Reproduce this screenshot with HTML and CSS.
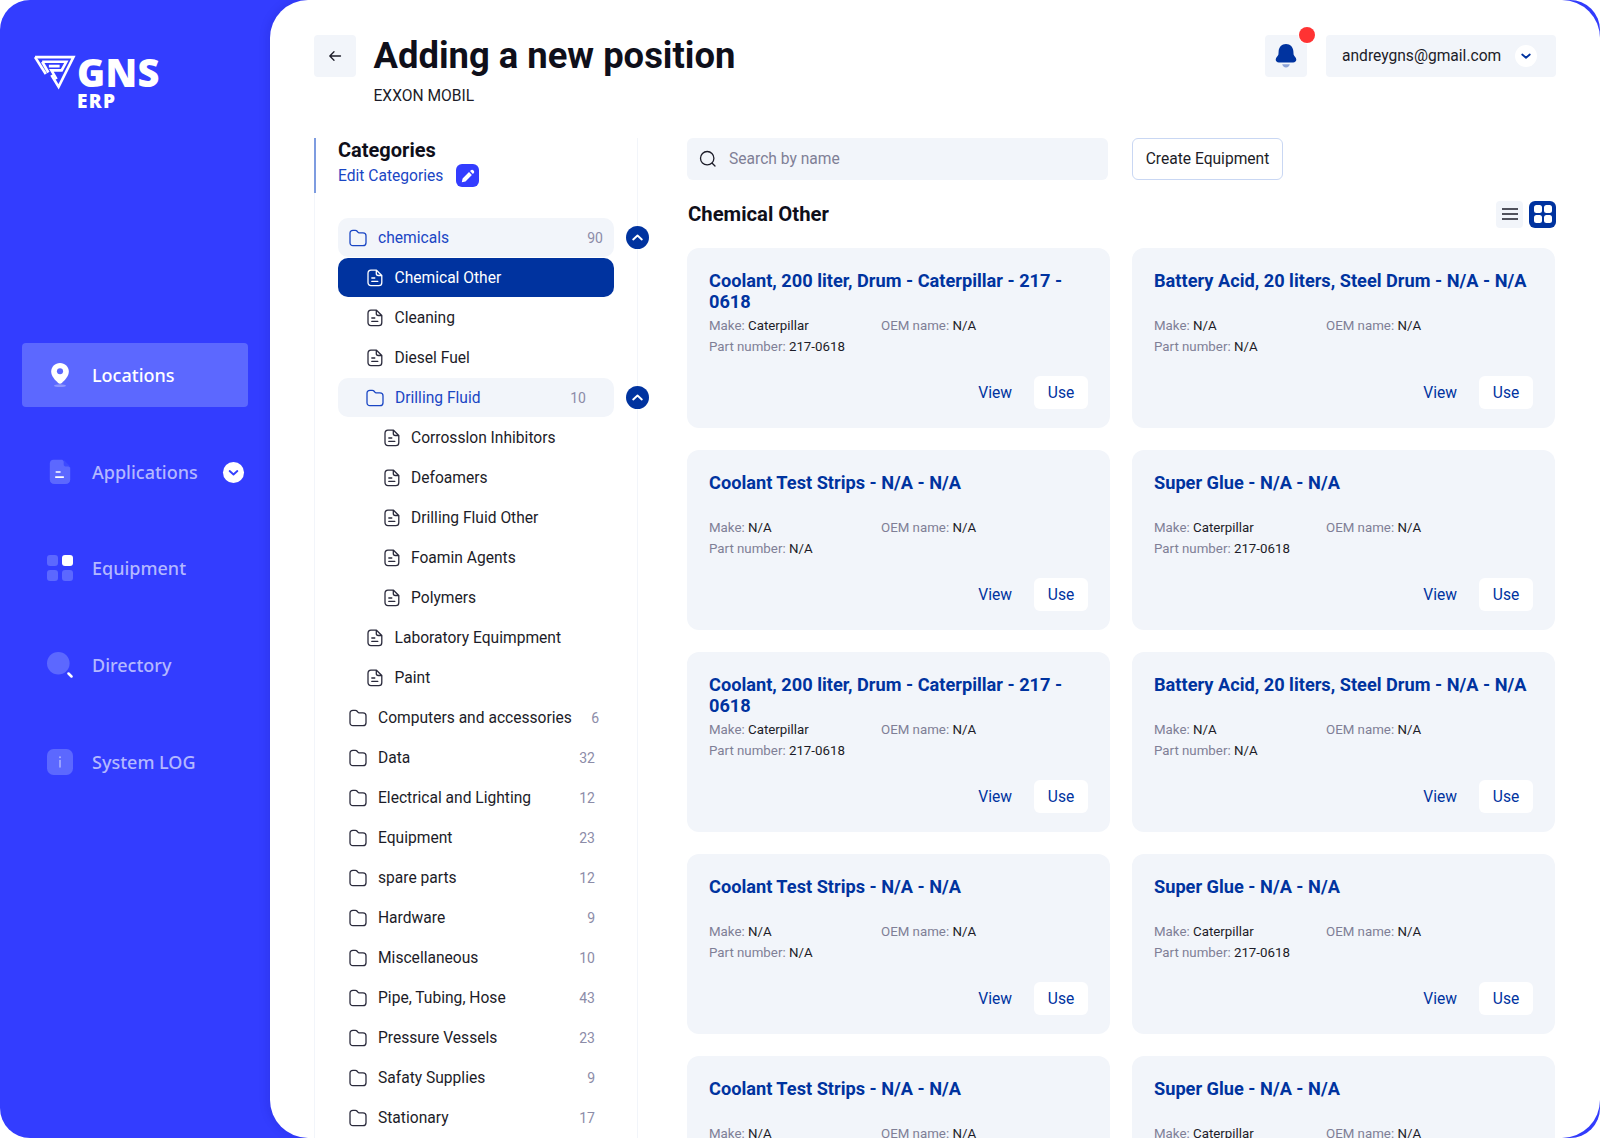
FILE: index.html
```html
<!DOCTYPE html>
<html lang="en">
<head>
<meta charset="utf-8">
<title>Adding a new position</title>
<link rel="stylesheet" href="styles.css">
</head>
<body>
<svg class="sprite" width="0" height="0" aria-hidden="true">
  <symbol id="folder" viewBox="0 0 18 18"><path d="M1 4.200C1 2.400 2.300 1.300 4 1.300h2.200c1 0 1.600.4 2.200 1.200l.5.7c.3.4.7.6 1.200.6H14c1.800 0 3 1.200 3 3v6.900c0 1.900-1.300 3-3 3H4c-1.800 0-3-1.200-3-3z" fill="none" stroke="currentColor" stroke-width="1.300"/></symbol>
  <symbol id="file" viewBox="0 0 16 18"><path d="M4 1.200h5.500L14.800 6.500V13.500c0 1.900-1.200 3.200-3 3.200H4c-1.800 0-3-1.300-3-3.200V4.400C1 2.500 2.200 1.200 4 1.200zM9.300 1.500V4.500c0 1.300.8 2 2 2h3.200M4.800 9h3M4.800 12.400h6" fill="none" stroke="currentColor" stroke-width="1.300" stroke-linecap="round" stroke-linejoin="round"/></symbol>
  <symbol id="up" viewBox="0 0 24 24"><circle cx="12" cy="12" r="12" fill="#00339f"/><path d="M7.500 14l4.500-4 4.500 4" fill="none" stroke="#fff" stroke-width="2" stroke-linecap="round" stroke-linejoin="round"/></symbol>
</svg>
<div class="app">
  <aside class="sidebar">
    <div class="logo">
      <svg class="logo-mark" viewBox="0 0 42 34" aria-hidden="true">
        <g fill="none" stroke="#fff" stroke-width="2.600">
          <path d="M2 2H39.500L25 31 18 19.500"/>
          <path d="M2 2 12.500 18.500"/>
          <path d="M9 6.500H32.500L28 15H18L23 23.500"/>
          <path d="M9 6.500 15 17"/>
          <path d="M15.500 10.800H26"/>
        </g>
      </svg>
      <div class="logo-text"><span class="logo-gns">GNS</span><span class="logo-erp">ERP</span></div>
    </div>
    <nav class="nav">
      <a class="nav-item is-active">
        <svg class="nav-icon" viewBox="0 0 26 28" aria-hidden="true"><ellipse cx="13" cy="25.500" rx="6.500" ry="1.500" fill="#fff" opacity=".3"/><path d="M13 1c5.300 0 9.500 4 9.500 9.200 0 5-4.500 9.500-7.500 12.300-1.200 1.100-2.800 1.100-4 0C8 19.700 3.500 15.200 3.500 10.200 3.500 5 7.700 1 13 1z" fill="#fff"/><circle cx="13" cy="10" r="3.300" fill="#5c68ff"/></svg>
        <span>Locations</span>
      </a>
      <a class="nav-item">
        <svg class="nav-icon" viewBox="0 0 26 28" aria-hidden="true"><path d="M6 .8h9.500L24 9.500V22c0 3-2 5-5 5H7c-3 0-5-2-5-5V5C2 2.500 3.500.8 6 .8z" fill="#5c68ff"/><path d="M17 .8 24 8h-5c-1.300 0-2-.8-2-2z" fill="#3d4aff"/><path d="M9 14h4M8.500 19.500h8" stroke="#fff" stroke-width="1.800" stroke-linecap="round"/></svg>
        <span>Applications</span>
        <svg class="nav-caret" viewBox="0 0 24 24" aria-hidden="true"><circle cx="12" cy="12" r="11" fill="#fff"/><path d="M8 10.500l4 3.500 4-3.500" fill="none" stroke="#3340ff" stroke-width="2" stroke-linecap="round" stroke-linejoin="round"/></svg>
      </a>
      <a class="nav-item">
        <svg class="nav-icon" viewBox="0 0 26 26" aria-hidden="true"><rect width="11" height="11" rx="3" fill="#5c68ff"/><rect x="15" width="11" height="11" rx="3" fill="#fff"/><rect y="15" width="11" height="11" rx="3" fill="#5c68ff"/><rect x="15" y="15" width="11" height="11" rx="3" fill="#5c68ff"/></svg>
        <span>Equipment</span>
      </a>
      <a class="nav-item">
        <svg class="nav-icon" viewBox="0 0 26 26" aria-hidden="true"><circle cx="11.300" cy="11.300" r="11.300" fill="#5c68ff"/><path d="M21.500 21.500l3 3" stroke="#fff" stroke-width="2.500" stroke-linecap="round"/></svg>
        <span>Directory</span>
      </a>
      <a class="nav-item">
        <svg class="nav-icon" viewBox="0 0 26 26" aria-hidden="true"><rect width="26" height="26" rx="6.500" fill="#5c68ff"/><path d="M13 11.500v6.500" stroke="#a9b0ff" stroke-width="1.600" stroke-linecap="round"/><circle cx="13" cy="8.300" r="1" fill="#a9b0ff"/></svg>
        <span>System LOG</span>
      </a>
    </nav>
  </aside>

  <main class="main">
    <header class="topbar">
      <button class="tile back" aria-label="Back">
        <svg viewBox="0 0 16 16" width="16" height="16" aria-hidden="true"><path d="M13.500 8H3M7 3.800 2.800 8 7 12.200" fill="none" stroke="#1c1c28" stroke-width="1.300" stroke-linecap="round" stroke-linejoin="round"/></svg>
      </button>
      <div class="title-block">
        <h1>Adding a new position</h1>
        <p>EXXON MOBIL</p>
      </div>
      <div class="tile bell">
        <svg viewBox="0 0 20 24" width="22" height="26" aria-hidden="true"><path d="M10 1c4 0 6.600 3 6.800 6.600l.2 3c.1 1.300 2.500 2.500 2.500 4.700 0 1.500-1.100 2.700-3 2.700H3.500c-1.900 0-3-1.200-3-2.700 0-2.200 2.400-3.400 2.500-4.700l.2-3C3.400 4 6 1 10 1z" fill="#00339f"/><path d="M6.500 19.500h7c-.3 1.700-1.700 3-3.500 3s-3.200-1.300-3.500-3z" fill="#8ea4d8"/></svg>
        <span class="dot"></span>
      </div>
      <div class="account">
        <span>andreygns@gmail.com</span>
        <svg viewBox="0 0 22 22" width="22" height="22" aria-hidden="true"><circle cx="11" cy="11" r="11" fill="#fff"/><path d="M7.200 9.500l3.800 3.300 3.800-3.300" fill="none" stroke="#00339f" stroke-width="1.800" stroke-linecap="round" stroke-linejoin="round"/></svg>
      </div>
    </header>

    <div class="columns">
      <section class="tree-panel">
        <div class="tree-head">
          <h2>Categories</h2>
          <div class="edit-line">
            <a>Edit Categories</a>
            <span class="edit-btn"><svg viewBox="0 0 16 16" width="16" height="16" aria-hidden="true"><path d="M1.800 14.200l.8-3.700 6.400-6.400 2.900 2.900-6.400 6.400zM10 3.100l.7-.7c.8-.8 2-.8 2.800 0l.1.1c.8.8.8 2 0 2.800l-.7.7z" fill="#fff"/></svg></span>
          </div>
        </div>
        <ul class="tree">
          <li class="row row-open"><svg class="ic-folder"><use href="#folder"/></svg><span class="name">chemicals</span><span class="count c1">90</span><svg class="toggle"><use href="#up"/></svg></li>
          <li class="row row-selected lv1"><svg class="ic-file"><use href="#file"/></svg><span class="name">Chemical Other</span></li>
          <li class="row lv1"><svg class="ic-file"><use href="#file"/></svg><span class="name">Cleaning</span></li>
          <li class="row lv1"><svg class="ic-file"><use href="#file"/></svg><span class="name">Diesel Fuel</span></li>
          <li class="row row-open lv1"><svg class="ic-folder"><use href="#folder"/></svg><span class="name">Drilling Fluid</span><span class="count c2">10</span><svg class="toggle"><use href="#up"/></svg></li>
          <li class="row lv2"><svg class="ic-file"><use href="#file"/></svg><span class="name">Corrosslon Inhibitors</span></li>
          <li class="row lv2"><svg class="ic-file"><use href="#file"/></svg><span class="name">Defoamers</span></li>
          <li class="row lv2"><svg class="ic-file"><use href="#file"/></svg><span class="name">Drilling Fluid Other</span></li>
          <li class="row lv2"><svg class="ic-file"><use href="#file"/></svg><span class="name">Foamin Agents</span></li>
          <li class="row lv2"><svg class="ic-file"><use href="#file"/></svg><span class="name">Polymers</span></li>
          <li class="row lv1"><svg class="ic-file"><use href="#file"/></svg><span class="name">Laboratory Equimpment</span></li>
          <li class="row lv1"><svg class="ic-file"><use href="#file"/></svg><span class="name">Paint</span></li>
          <li class="row"><svg class="ic-folder"><use href="#folder"/></svg><span class="name">Computers and accessories</span><span class="count c3">6</span></li>
          <li class="row"><svg class="ic-folder"><use href="#folder"/></svg><span class="name">Data</span><span class="count">32</span></li>
          <li class="row"><svg class="ic-folder"><use href="#folder"/></svg><span class="name">Electrical and Lighting</span><span class="count">12</span></li>
          <li class="row"><svg class="ic-folder"><use href="#folder"/></svg><span class="name">Equipment</span><span class="count">23</span></li>
          <li class="row"><svg class="ic-folder"><use href="#folder"/></svg><span class="name">spare parts</span><span class="count">12</span></li>
          <li class="row"><svg class="ic-folder"><use href="#folder"/></svg><span class="name">Hardware</span><span class="count">9</span></li>
          <li class="row"><svg class="ic-folder"><use href="#folder"/></svg><span class="name">Miscellaneous</span><span class="count">10</span></li>
          <li class="row"><svg class="ic-folder"><use href="#folder"/></svg><span class="name">Pipe, Tubing, Hose</span><span class="count">43</span></li>
          <li class="row"><svg class="ic-folder"><use href="#folder"/></svg><span class="name">Pressure Vessels</span><span class="count">23</span></li>
          <li class="row"><svg class="ic-folder"><use href="#folder"/></svg><span class="name">Safaty Supplies</span><span class="count">9</span></li>
          <li class="row"><svg class="ic-folder"><use href="#folder"/></svg><span class="name">Stationary</span><span class="count">17</span></li>
        </ul>
      </section>

      <section class="content">
        <div class="tools">
          <label class="search">
            <svg viewBox="0 0 18 18" width="18" height="18" aria-hidden="true"><circle cx="8.200" cy="8.200" r="6.700" fill="none" stroke="#1c1c28" stroke-width="1.300"/><path d="M13.200 13.200l2.800 2.800" stroke="#1c1c28" stroke-width="1.300" stroke-linecap="round"/></svg>
            <span>Search by name</span>
          </label>
          <button class="create">Create Equipment</button>
        </div>
        <div class="section-head">
          <h3>Chemical Other</h3>
          <div class="views">
            <span class="view-btn"><svg viewBox="0 0 16 12" width="16" height="12" aria-hidden="true"><path d="M0 1h16M0 6h16M0 11h16" stroke="#1c1c28" stroke-width="1.300"/></svg></span>
            <span class="view-btn is-on"><svg viewBox="0 0 18 18" width="18" height="18" aria-hidden="true"><rect width="8" height="8" rx="2.500" fill="#fff"/><rect x="10" width="8" height="8" rx="2.500" fill="#fff"/><rect y="10" width="8" height="8" rx="2.500" fill="#fff"/><rect x="10" y="10" width="8" height="8" rx="2.500" fill="#fff"/></svg></span>
          </div>
        </div>
        <div class="cards">
          <article class="card"><h4>Coolant, 200 liter, Drum - Caterpillar - 217 - 0618</h4><div class="meta"><p><i>Make:</i> Caterpillar</p><p><i>OEM name:</i> N/A</p><p class="full"><i>Part number:</i> 217-0618</p></div><div class="actions"><a class="view">View</a><a class="use">Use</a></div></article>
          <article class="card"><h4>Battery Acid, 20 liters, Steel Drum - N/A - N/A</h4><div class="meta"><p><i>Make:</i> N/A</p><p><i>OEM name:</i> N/A</p><p class="full"><i>Part number:</i> N/A</p></div><div class="actions"><a class="view">View</a><a class="use">Use</a></div></article>
          <article class="card"><h4>Coolant Test Strips - N/A - N/A</h4><div class="meta"><p><i>Make:</i> N/A</p><p><i>OEM name:</i> N/A</p><p class="full"><i>Part number:</i> N/A</p></div><div class="actions"><a class="view">View</a><a class="use">Use</a></div></article>
          <article class="card"><h4>Super Glue - N/A - N/A</h4><div class="meta"><p><i>Make:</i> Caterpillar</p><p><i>OEM name:</i> N/A</p><p class="full"><i>Part number:</i> 217-0618</p></div><div class="actions"><a class="view">View</a><a class="use">Use</a></div></article>
          <article class="card"><h4>Coolant, 200 liter, Drum - Caterpillar - 217 - 0618</h4><div class="meta"><p><i>Make:</i> Caterpillar</p><p><i>OEM name:</i> N/A</p><p class="full"><i>Part number:</i> 217-0618</p></div><div class="actions"><a class="view">View</a><a class="use">Use</a></div></article>
          <article class="card"><h4>Battery Acid, 20 liters, Steel Drum - N/A - N/A</h4><div class="meta"><p><i>Make:</i> N/A</p><p><i>OEM name:</i> N/A</p><p class="full"><i>Part number:</i> N/A</p></div><div class="actions"><a class="view">View</a><a class="use">Use</a></div></article>
          <article class="card"><h4>Coolant Test Strips - N/A - N/A</h4><div class="meta"><p><i>Make:</i> N/A</p><p><i>OEM name:</i> N/A</p><p class="full"><i>Part number:</i> N/A</p></div><div class="actions"><a class="view">View</a><a class="use">Use</a></div></article>
          <article class="card"><h4>Super Glue - N/A - N/A</h4><div class="meta"><p><i>Make:</i> Caterpillar</p><p><i>OEM name:</i> N/A</p><p class="full"><i>Part number:</i> 217-0618</p></div><div class="actions"><a class="view">View</a><a class="use">Use</a></div></article>
          <article class="card"><h4>Coolant Test Strips - N/A - N/A</h4><div class="meta"><p><i>Make:</i> N/A</p><p><i>OEM name:</i> N/A</p><p class="full"><i>Part number:</i> N/A</p></div><div class="actions"><a class="view">View</a><a class="use">Use</a></div></article>
          <article class="card"><h4>Super Glue - N/A - N/A</h4><div class="meta"><p><i>Make:</i> Caterpillar</p><p><i>OEM name:</i> N/A</p><p class="full"><i>Part number:</i> 217-0618</p></div><div class="actions"><a class="view">View</a><a class="use">Use</a></div></article>
        </div>
      </section>
    </div>
  </main>
</div>
</body>
</html>
```
FILE: styles.css
```css
* { box-sizing: border-box; }
html, body { margin: 0; height: 100%; background: #fff; }
body { overflow: hidden; font-family: Roboto, "Liberation Sans", sans-serif; color: #1c1c28; }
h1, h2, h3, h4, p, ul { margin: 0; padding: 0; }
ul { list-style: none; }
i { font-style: normal; }
button { font: inherit; color: inherit; border: 0; padding: 0; background: none; }
.sprite { position: absolute; }

.app { display: flex; height: 1138px; overflow: hidden; background: #333dff; border-radius: 30px; }

.sidebar { flex: 0 0 270px; display: flex; flex-direction: column; }
.logo { display: flex; align-items: flex-start; padding: 55px 0 0 33px; height: 343px; color: #fff; }
.logo-mark { width: 43px; height: 35px; flex: none; }
.logo-text { display: flex; flex-direction: column; align-items: flex-start; margin-left: 1px; }
.logo-gns { font: 800 38px/34px "Open Sans", sans-serif; letter-spacing: .4px; }
.logo-erp { font: 800 19px/20px "Open Sans", sans-serif; margin: 2px 0 0 0; letter-spacing: 1.400px; }

.nav { display: flex; flex-direction: column; margin: 0 22px; }
.nav-item { position: relative; display: flex; align-items: center; height: 64px; margin-bottom: 32.700px; padding-left: 25px; border-radius: 4px; font: 500 18px "Noto Sans", sans-serif; color: #b3b8ff; }
.nav-item span { margin-left: 19px; }
.nav-item.is-active { background: #5c68ff; color: #fff; }
.nav-icon { width: 26px; height: 26px; flex: none; }
.nav-caret { position: absolute; left: 200px; top: 21px; width: 23px; height: 23px; }

.main { flex: 1; min-width: 0; background: #fff; border-radius: 38px; padding: 35px 44px 0; box-shadow: -3px 0 8px rgba(20, 20, 120, .12); }

.topbar { display: flex; align-items: flex-start; }
.tile { flex: none; display: flex; align-items: center; justify-content: center; width: 42px; height: 42px; background: #f2f5fa; border-radius: 4px; }
.title-block { flex: 1; margin-left: 17.500px; }
h1 { font-size: 36.400px; line-height: 42px; font-weight: 700; color: #0f0f1a; }
.title-block p { margin-top: 9px; font-size: 15.600px; line-height: 20px; }
.bell { position: relative; }
.dot { position: absolute; right: -8px; top: -8px; width: 16px; height: 16px; border-radius: 50%; background: #ff3333; box-shadow: 0 0 0 1px #fff; }
.account { display: flex; align-items: center; justify-content: space-between; width: 230px; height: 42px; margin-left: 19px; padding: 0 19px 0 16px; background: #f2f5fa; border-radius: 4px; font-size: 15.600px; }

.columns { display: flex; margin-top: 32px; }
.tree-panel { flex: 0 0 324px; border-left: 1px solid #f2f5fa; border-right: 1px solid #f2f5fa; height: 1000px; }
.tree-head { margin-left: -1px; height: 55px; padding: 0 0 0 22px; border-left: 2px solid #7e9ce0; }
h2 { font-size: 20px; line-height: 24px; font-weight: 700; color: #0f0f1a; }
.edit-line { display: flex; align-items: center; margin-top: 2px; color: #1a46c4; font-size: 15.600px; }
.edit-btn { display: flex; align-items: center; justify-content: center; width: 23px; height: 23px; margin-left: 13px; border-radius: 6px; background: #333dff; }

.tree { margin: 25px 23px 0; width: 276px; }
.row { position: relative; display: flex; align-items: center; height: 40px; padding: 0 19px 0 11px; border-radius: 10px; font-size: 15.600px; }
.row .name { margin-left: 11px; flex: 1; white-space: nowrap; }
.row svg { flex: none; }
.ic-folder { width: 18px; height: 18px; color: #2a2a3c; }
.ic-file { width: 16px; height: 18px; margin-left: 1px; margin-right: .5px; color: #2a2a3c; }
.lv1 { padding-left: 28px; }
.lv2 { padding-left: 44.500px; }
.row-open { background: #f2f5fa; color: #1a46c4; height: 39px; margin-bottom: 1px; }
.row-open .ic-folder { color: #1a46c4; }
.row-selected { background: #00339f; color: #fff; height: 39px; margin-bottom: 1px; }
.row-selected .ic-file { color: #fff; }
.count { color: #8c8ca8; font-size: 14px; }
.c1 { margin-right: -8px; }
.c2 { margin-right: 9px; }
.c3 { margin-right: -4px; }
.toggle { position: absolute; left: 288px; top: 8px; width: 23px; height: 23px; }

.content { flex: 1; min-width: 0; margin-left: 49px; }
.tools { display: flex; }
.search { flex: 0 0 421px; display: flex; align-items: center; height: 42px; padding-left: 12px; background: #f2f5fa; border-radius: 6px; font-size: 15.600px; color: #7f7f96; }
.search span { margin-left: 12px; }
.create { flex: 0 0 151px; height: 42px; margin-left: 24px; border: 1px solid #c9d7f3; border-radius: 6px; background: #fff; font-size: 15.600px; }
.section-head { display: flex; align-items: center; justify-content: space-between; height: 68px; padding: 0 0 0 1px; }
h3 { font-size: 20.300px; font-weight: 700; color: #0f0f1a; line-height: 24px; }
.views { display: flex; gap: 6px; }
.view-btn { display: flex; align-items: center; justify-content: center; width: 27px; height: 27px; border-radius: 4px; background: #f2f5fa; }
.view-btn.is-on { background: #00339f; border-radius: 6px; }

.cards { display: grid; grid-template-columns: 423px 423px; grid-auto-rows: 180px; column-gap: 22px; row-gap: 22px; }
.card { display: flex; flex-direction: column; padding: 22px 22px 19px; background: #f2f5fa; border-radius: 12px; }
h4 { font-size: 18.200px; line-height: 21px; font-weight: 700; color: #00339f; height: 42px; }
.meta { display: grid; grid-template-columns: 172px 1fr; margin-top: 3px; font-size: 13.300px; line-height: 21.400px; }
.meta p { white-space: nowrap; }
.meta i { color: #7f7f96; }
.meta .full { grid-column: 1 / 3; }
.actions { display: flex; align-items: center; justify-content: flex-end; margin-top: auto; font-size: 15.600px; color: #00339f; }
.use { display: flex; align-items: center; justify-content: center; width: 54px; height: 33px; margin-left: 22px; background: #fff; border-radius: 6px; }
```
